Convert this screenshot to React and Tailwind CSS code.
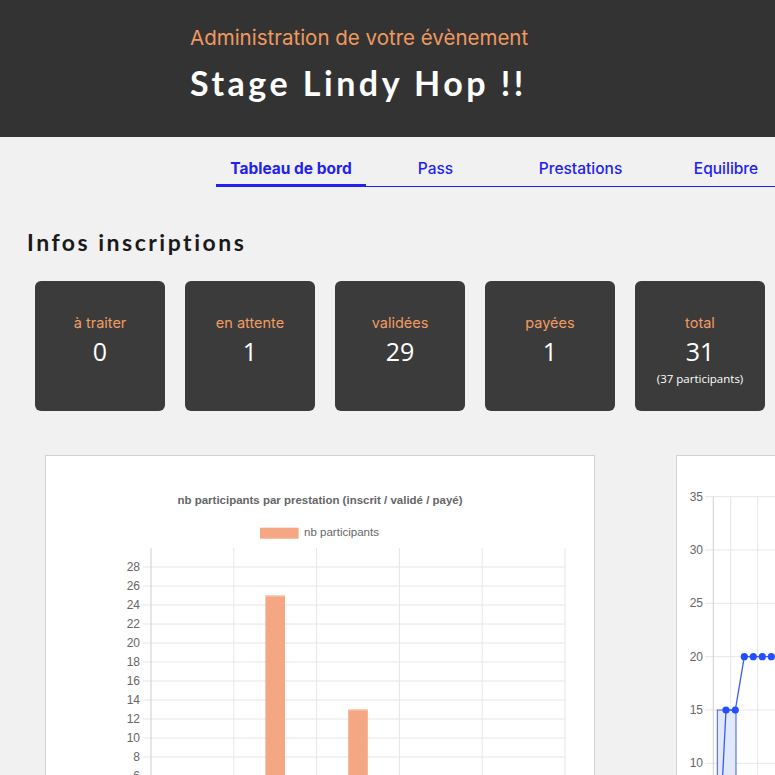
import React from 'react';

const stats = [
  { label: 'à traiter', value: 0 },
  { label: 'en attente', value: 1 },
  { label: 'validées', value: 29 },
  { label: 'payées', value: 1 },
  { label: 'total', value: 31, sub: '(37 participants)' },
];

const tabs = [
  { label: 'Tableau de bord', w: 'w-[150px]', active: true },
  { label: 'Pass', w: 'w-[139px]' },
  { label: 'Prestations', w: 'w-[151px]' },
  { label: 'Equilibre', w: 'w-[140px]' },
];

function StatCard({ label, value, sub }) {
  return (
    <div className="w-[130px] h-[130px] shrink-0 rounded-md bg-[#3b3b3b] pt-[31px] flex flex-col items-center">
      <div className="font-['Inter',sans-serif] text-[14.5px] leading-[22px] text-[#f29b62]">{label}</div>
      <div className="font-['Open_Sans',sans-serif] text-[25px] leading-[30px] text-white mt-[2px]">{value}</div>
      {sub && <div className="font-['Open_Sans',sans-serif] text-[11.5px] leading-[16px] text-white mt-[5px]">{sub}</div>}
    </div>
  );
}

function BarChart() {
  const x0 = 105;
  const colW = 82.8;
  const yOf = (v) => 377 - 9.5 * v;
  const ticks = [];
  for (let v = 0; v <= 28; v += 2) ticks.push(v);
  const bars = [
    { col: 1, v: 25 },
    { col: 2, v: 13 },
  ];
  return (
    <svg width="548" height="330" className="block">
      {ticks.map((v) => (
        <g key={v}>
          <line x1={97} x2={x0 + colW * 5} y1={yOf(v)} y2={yOf(v)} stroke="#e6e6e6" strokeWidth="1" />
          <text x={94} y={yOf(v) + 4} textAnchor="end" fontSize="12" fill="#666" fontFamily="Liberation Sans, Arial, sans-serif">{v}</text>
        </g>
      ))}
      {[0, 1, 2, 3, 4, 5].map((i) => (
        <line key={i} x1={x0 + colW * i} x2={x0 + colW * i} y1={92} y2={400} stroke={i === 0 ? '#cfcfcf' : '#e6e6e6'} strokeWidth="1" />
      ))}
      {bars.map((b) => {
        const cx = x0 + colW * (b.col + 0.5);
        return (
          <g key={b.col}>
            <rect x={cx - 9.8} y={yOf(b.v)} width="19.6" height={400 - yOf(b.v)} fill="#f5a683" />
            <line x1={cx - 9.8} x2={cx + 9.8} y1={yOf(b.v) + 0.5} y2={yOf(b.v) + 0.5} stroke="#fbcbb2" strokeWidth="1" />
          </g>
        );
      })}
      <text x={274} y={48} textAnchor="middle" fontSize="11" fontWeight="bold" fill="#666" textLength="285" lengthAdjust="spacingAndGlyphs" fontFamily="Liberation Sans, Arial, sans-serif">
        nb participants par prestation (inscrit / validé / payé)
      </text>
      <rect x={214} y={71.7} width="38.6" height="11" fill="#f5a683" />
      <text x={258} y={80} fontSize="11" fill="#666" textLength="75" lengthAdjust="spacingAndGlyphs" fontFamily="Liberation Sans, Arial, sans-serif">nb participants</text>
    </svg>
  );
}

function LineChart() {
  const yOf = (v) => 40.7 + (35 - v) * 10.667;
  const ticks = [35, 30, 25, 20, 15, 10, 5, 0];
  const vlines = [36.3, 53.7, 80.7, 107.7, 134.7];
  const pts = [
    [49, 15], [58.3, 15], [67.3, 20], [76.3, 20], [85.3, 20], [94.3, 20], [103.3, 20],
  ];
  return (
    <svg width="548" height="330" className="block">
      {ticks.map((v) => (
        <g key={v}>
          <line x1={28} x2={548} y1={yOf(v)} y2={yOf(v)} stroke="#e6e6e6" strokeWidth="1" />
          <text x={26} y={yOf(v) + 4} textAnchor="end" fontSize="12" fill="#666" fontFamily="Liberation Sans, Arial, sans-serif">{v}</text>
        </g>
      ))}
      {vlines.map((x, i) => (
        <line key={i} x1={x} x2={x} y1={40.7} y2={400} stroke={i === 0 ? '#cfcfcf' : '#e6e6e6'} strokeWidth="1" />
      ))}
      <rect x={40.3} y={yOf(15)} width={18.7} height={400 - yOf(15)} fill="#e3e9fd" stroke="#3a5cf5" strokeWidth="1" />
      <polyline
        points={`45.7,319 ${pts.map(([x, v]) => `${x},${yOf(v)}`).join(' ')}`}
        fill="none"
        stroke="#3a5cf5"
        strokeWidth="1.3"
      />
      {pts.map(([x, v], i) => (
        <circle key={i} cx={x} cy={yOf(v)} r="3.6" fill="#2250ff" />
      ))}
    </svg>
  );
}

export default function App() {
  return (
    <div className="w-full min-h-screen bg-[#f1f1f1] overflow-hidden">
      <header className="h-[137px] bg-[#333333] pl-[190px] pt-[24px]">
        <div className="font-['Inter',sans-serif] text-[20.5px] leading-[28px] text-[#ef9960]">
          Administration de votre évènement
        </div>
        <h1 className="mt-[9px] font-['Lato',sans-serif] font-bold text-[34px] leading-[44px] tracking-[3.5px] text-white">
          Stage Lindy Hop !!
        </h1>
      </header>

      <nav className="ml-[216px] flex border-b border-[#2222f0]">
        {tabs.map((t) => (
          <div
            key={t.label}
            className={`${t.w} shrink-0 text-center pt-[20px] pb-[3px] -mb-px border-b-[3px] font-['Inter',sans-serif] text-[15.5px] leading-[24px] text-[#2222f0] ${
              t.active ? 'border-[#2222f0] font-bold' : 'border-transparent font-medium'
            }`}
          >
            {t.label}
          </div>
        ))}
      </nav>

      <h2 className="mt-[39px] pl-[27px] font-['Lato',sans-serif] font-bold text-[23px] leading-[32px] tracking-[2.5px] text-[#1a1a1a]">
        Infos inscriptions
      </h2>

      <div className="mt-[23px] pl-[35px] flex gap-[20px]">
        {stats.map((s) => (
          <StatCard key={s.label} {...s} />
        ))}
      </div>

      <div className="mt-[44px] pl-[45px] flex gap-[81px]">
        <div className="w-[550px] shrink-0 bg-white border border-[#d2d2d2]">
          <BarChart />
        </div>
        <div className="w-[550px] shrink-0 bg-white border border-[#d2d2d2]">
          <LineChart />
        </div>
      </div>
    </div>
  );
}
